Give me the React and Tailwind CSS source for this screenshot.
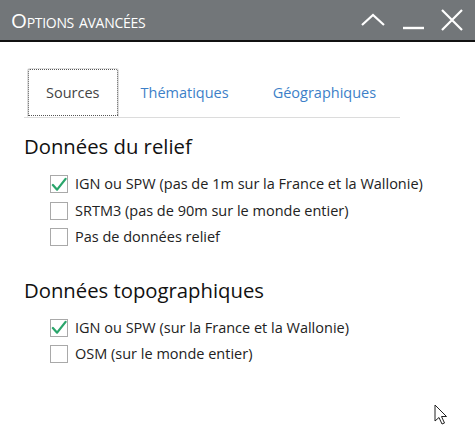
import React, { useState } from "react";

const RELIEF = [
  { label: "IGN ou SPW (pas de 1m sur la France et la Wallonie)", checked: true },
  { label: "SRTM3 (pas de 90m sur le monde entier)", checked: false },
  { label: "Pas de données relief", checked: false },
];

const TOPO = [
  { label: "IGN ou SPW (sur la France et la Wallonie)", checked: true },
  { label: "OSM (sur le monde entier)", checked: false },
];

const Check = ({ checked, label }) => (
  <label className="flex items-center gap-[7px] h-[26.5px]">
    <span className="w-[18px] h-[18px] border border-[#a9a9a9] bg-white flex items-center justify-center">
      {checked && (
        <svg width="17" height="15" viewBox="0 0 17 15">
          <path d="M2 8 L6.5 13 L15.5 1.5" fill="none" stroke="#2aa56b" strokeWidth="2.4" strokeLinecap="round" strokeLinejoin="round" />
        </svg>
      )}
    </span>
    <span className="text-[14.5px] text-[#222]">{label}</span>
  </label>
);

const App = () => {
  const [tab] = useState("Sources");

  return (
    <div className="w-[475px] h-[426px] bg-white relative overflow-hidden font-['Open_Sans',sans-serif]">
      {/* title bar */}
      <div className="h-[42px] bg-[#727679] border-b-2 border-[#111] flex items-center pl-[11px] pr-[12px]">
        <span className="text-white text-[20.5px] [font-variant:small-caps] tracking-[-0.3px] flex-1">Options avancées</span>
        <div className="flex items-center gap-[16px]">
          <svg width="26" height="14" viewBox="0 0 26 14">
            <path d="M2 12 L13 2 L24 12" fill="none" stroke="white" strokeWidth="2.2" />
          </svg>
          <svg width="23" height="24" viewBox="0 0 23 24">
            <path d="M1 20 L22 20" fill="none" stroke="white" strokeWidth="2.4" />
          </svg>
          <svg width="22" height="22" viewBox="0 0 22 22">
            <path d="M1 1 L21 21 M21 1 L1 21" fill="none" stroke="white" strokeWidth="2.2" />
          </svg>
        </div>
      </div>

      <div className="px-[24px] pt-[26px]">
        {/* tabs */}
        <div className="flex border-b border-[#dcdcdc] mr-[51px] pl-[3px]">
          {["Sources", "Thématiques", "Géographiques"].map((t) => (
            <div
              key={t}
              className={
                t === tab
                  ? "h-[49px] px-[18px] flex items-center border border-[#ddd] border-b-white -mb-px rounded-t-[3px] outline-1 outline-dotted outline-[#555] -outline-offset-2 text-[#444] text-[14.5px]"
                  : "h-[49px] px-[22px] first:pl-[23px] flex items-center text-[#3d7fc8] text-[14.5px]"
              }
            >
              {t}
            </div>
          ))}
        </div>

        <h2 className="text-[20.3px] text-[#111] mt-[14px] leading-[28px]">Données du relief</h2>
        <div className="pl-[26px] mt-[11px]">
          {RELIEF.map((r) => (
            <Check key={r.label} {...r} />
          ))}
        </div>

        <h2 className="text-[20.3px] text-[#111] mt-[25px] leading-[28px]">Données topographiques</h2>
        <div className="pl-[26px] mt-[11px]">
          {TOPO.map((r) => (
            <Check key={r.label} {...r} />
          ))}
        </div>
      </div>

      {/* mouse pointer */}
      <svg className="absolute left-[434px] top-[404px]" width="14" height="22" viewBox="0 0 14 22">
        <path d="M1 1 L1 17 L5 13.5 L8 20 L10.5 19 L7.5 12.5 L12.5 12.5 Z" fill="white" stroke="#222" strokeWidth="1" />
      </svg>
    </div>
  );
};

export default App;
